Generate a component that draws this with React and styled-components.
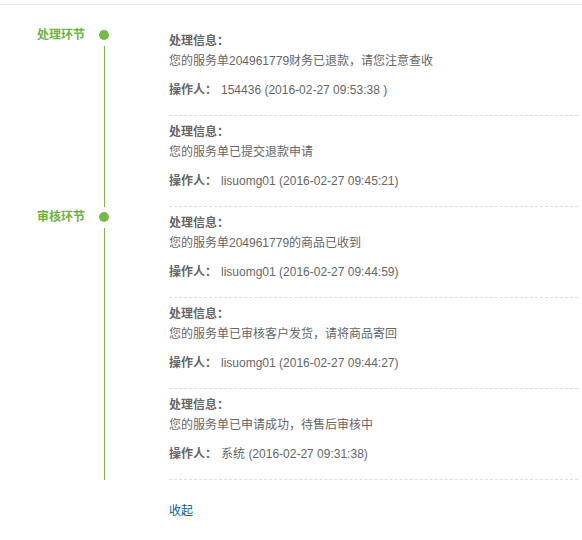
import React from "react";
import styled, { createGlobalStyle } from "styled-components";

const GlobalStyle = createGlobalStyle`
  body {
    margin: 0;
    background: #fff;
    font-family: "Liberation Sans", "Noto Sans CJK SC", sans-serif;
    font-size: 12px;
    color: #666;
  }
`;

const stages = [
  {
    name: "处理环节",
    items: [
      { info: "您的服务单204961779财务已退款，请您注意查收", who: "154436", time: "(2016-02-27 09:53:38 )" },
      { info: "您的服务单已提交退款申请", who: "lisuomg01", time: "(2016-02-27 09:45:21)" },
    ],
  },
  {
    name: "审核环节",
    items: [
      { info: "您的服务单204961779的商品已收到", who: "lisuomg01", time: "(2016-02-27 09:44:59)" },
      { info: "您的服务单已审核客户发货，请将商品寄回", who: "lisuomg01", time: "(2016-02-27 09:44:27)" },
      { info: "您的服务单已申请成功，待售后审核中", who: "系统", time: "(2016-02-27 09:31:38)" },
    ],
  },
];

function App() {
  return (
    <>
      <GlobalStyle />
      <Page>
        <Panel>
          {stages.map((stage) => (
            <Stage key={stage.name}>
              <Side>
                <Label>{stage.name}</Label>
                <Track>
                  <Dot />
                  <Line />
                </Track>
              </Side>
              <Items>
                {stage.items.map((item, i) => (
                  <Item key={i}>
                    <Heading>处理信息：</Heading>
                    <Text>{item.info}</Text>
                    <Operator>
                      <b>操作人：</b>
                      {item.who} {item.time}
                    </Operator>
                  </Item>
                ))}
              </Items>
            </Stage>
          ))}
          <Footer>
            <Toggle href="#">收起</Toggle>
          </Footer>
        </Panel>
      </Page>
    </>
  );
}

export default App;

const Page = styled.div`
  padding-top: 4px;
`;

const Panel = styled.div`
  border-top: 1px solid #e6e6e6;
  padding-top: 20px;
`;

const Stage = styled.div`
  display: flex;
`;

const Side = styled.div`
  width: 169px;
  flex-shrink: 0;
  display: flex;
  padding-left: 37px;
  box-sizing: border-box;
`;

const Label = styled.div`
  width: 62px;
  line-height: 20px;
  font-weight: bold;
  color: #6db33f;
`;

const Track = styled.div`
  width: 10px;
  display: flex;
  flex-direction: column;
  align-items: center;
`;

const Dot = styled.span`
  width: 10px;
  height: 10px;
  margin-top: 5px;
  border-radius: 50%;
  background: #76b947;
`;

const Line = styled.span`
  flex: 1;
  width: 1px;
  margin-top: 6px;
  background: #76b947;
`;

const Items = styled.div`
  flex: 1;
  padding-right: 4px;
`;

const Item = styled.div`
  padding: 6px 0 15px;
  border-bottom: 1px dashed #ddd;
  line-height: 20px;
`;

const Heading = styled.div`
  font-weight: bold;
`;

const Text = styled.div``;

const Operator = styled.div`
  margin-top: 9px;
  b {
    font-weight: bold;
    margin-right: 4px;
  }
`;

const Footer = styled.div`
  padding: 21px 0 0 169px;
  line-height: 20px;
`;

const Toggle = styled.a`
  color: #005ea7;
  text-decoration: none;
`;
